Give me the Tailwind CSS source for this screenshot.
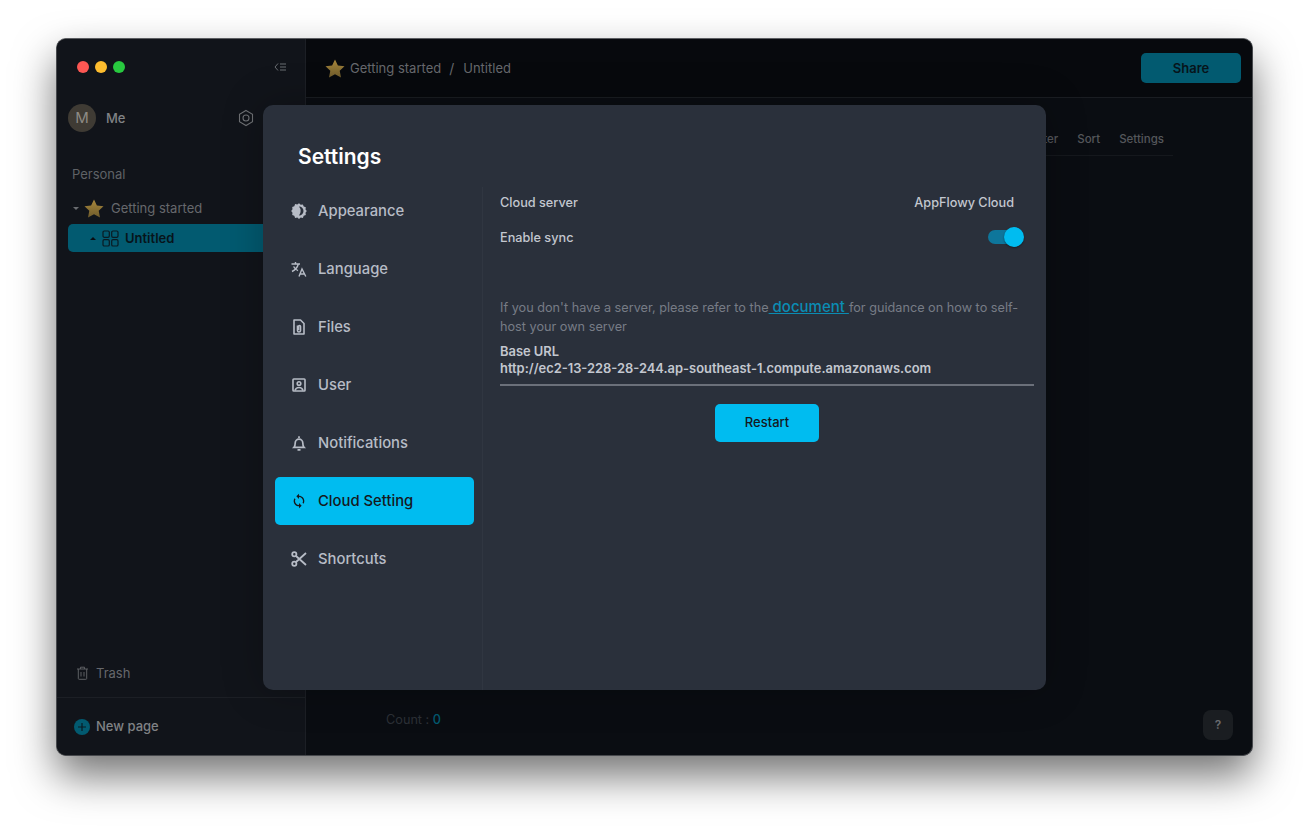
<!DOCTYPE html>
<html><head><meta charset="utf-8"><script src="https://cdn.jsdelivr.net/npm/@tailwindcss/browser@4"></script></head>
<body class="bg-white m-0 font-['Inter',sans-serif]">
<div class="w-[1309px] h-[831px] pt-[38px] pl-[56px] overflow-hidden">
<div class="relative w-[1197px] h-[718px] rounded-[10px] flex overflow-hidden shadow-[0_20px_42px_rgba(0,0,0,0.55)] border border-[#47494d] border-t-[#5c5e62] bg-[#0a0d12]">
  <!-- sidebar -->
  <aside class="w-[249px] shrink-0 bg-[#11141a] border-r border-[#1c1f25] flex flex-col">
    <div class="h-[56px] flex items-center pl-[20px] pr-[19px] gap-[6px]">
      <span class="w-3 h-3 rounded-full bg-[#fc5753]"></span><span class="w-3 h-3 rounded-full bg-[#fdbc2e]"></span><span class="w-3 h-3 rounded-full bg-[#28c93f]"></span>
      <svg class="ml-auto" width="12" height="10" viewBox="0 0 12 10" fill="none" stroke="#6b6e73" stroke-width="1"><path d="M4 1.500 1 5l3 3.500M6 2h6M6 5h6M6 8h6"/></svg>
    </div>
    <div class="flex items-center h-[28px] mt-[9px] pl-[11px] pr-[50px]">
      <span class="w-7 h-7 rounded-full bg-[#3f3b34] text-[#8e8b85] flex items-center justify-center text-[15px]">M</span>
      <span class="ml-[10px] pt-[1px] text-[13px] font-medium text-[#808285]">Me</span>
      <svg class="ml-auto" width="18" height="18" viewBox="0 0 18 18" fill="none" stroke="#6e7074" stroke-width="1.100"><path d="M9 1.500 15.500 5.200v7.600L9 16.500 2.500 12.800V5.200Z"/><circle cx="9" cy="9" r="3"/></svg>
    </div>
    <div class="mt-[34px] pl-[15px] text-[13px] text-[#5f6266] leading-[16px]">Personal</div>
    <div class="mt-[12px] h-[28px] flex items-center pl-[16px]">
      <span class="w-0 h-0 border-x-[3px] border-x-transparent border-t-[3px] border-t-[#6a6c70]"></span>
      <svg class="ml-[5px]" width="20" height="19" viewBox="0 0 20 19"><defs><linearGradient id="s1" x1="0" y1="0" x2="0" y2="1"><stop offset="0" stop-color="#a8873c"/><stop offset="1" stop-color="#6f5c2c"/></linearGradient></defs><path d="M10 .5l2.900 6 6.600.8-4.800 4.500 1.300 6.600L10 15.200l-6 3.200 1.300-6.600L.5 7.300l6.600-.8Z" fill="url(#s1)"/></svg>
      <span class="ml-[7px] pt-[1px] text-[13px] text-[#66686c]">Getting started</span>
    </div>
    <div class="ml-[11px] mr-[11px] mt-[2px] h-[28px] bg-[#025a70] rounded-[5px] flex items-center pl-[22px]">
      <span class="w-0 h-0 border-x-[3px] border-x-transparent border-b-[3px] border-b-[#0a0d12]"></span>
      <svg class="ml-[6px]" width="17" height="17" viewBox="0 0 17 17" fill="none" stroke="#0a1a22" stroke-width="1.200"><rect x="1" y="1" width="6.300" height="6.300" rx="1.300"/><rect x="9.700" y="1" width="6.300" height="6.300" rx="1.300"/><rect x="1" y="9.700" width="6.300" height="6.300" rx="1.300"/><rect x="9.700" y="9.700" width="6.300" height="6.300" rx="1.300"/></svg>
      <span class="ml-[6px] pt-[1px] text-[13px] font-semibold text-[#07141b]">Untitled</span>
    </div>
    <div class="mt-auto h-[48px] flex items-center pl-[19px] text-[13px] text-[#66686c]">
      <svg width="13" height="14" viewBox="0 0 13 14" fill="none" stroke="#5d5f63" stroke-width="1"><path d="M1 3h11M4.500 3V1.200h4V3M2.300 3v9.500a.8.8 0 0 0 .8.8h6.800a.8.8 0 0 0 .8-.8V3M5 6v4.500M8 6v4.500"/></svg>
      <span class="ml-[7px] pt-[1px]">Trash</span>
    </div>
    <div class="h-[58px] border-t border-[#1c1f25] flex items-center pl-[17px]">
      <span class="w-4 h-4 rounded-full bg-[#025a70] flex items-center justify-center"><svg width="10" height="10" viewBox="0 0 10 10" stroke="#0a1a22" stroke-width="1.200"><path d="M5 1v8M1 5h8"/></svg></span>
      <span class="ml-[6px] text-[13px] font-medium text-[#808285]">New page</span>
    </div>
  </aside>
  <!-- main -->
  <main class="flex-1 flex flex-col min-w-0">
    <header class="h-[59px] bg-[#07090d] border-b border-[#1a1d22] flex items-center pl-[19px] pr-[11px]">
      <svg width="20" height="19" viewBox="0 0 20 19"><path d="M10 .5l2.900 6 6.600.8-4.800 4.500 1.300 6.600L10 15.200l-6 3.200 1.300-6.600L.5 7.300l6.600-.8Z" fill="url(#s1)"/></svg>
      <span class="ml-[5px] pt-[1px] text-[13px] text-[#66686c]">Getting started</span>
      <span class="ml-[8px] pt-[1px] text-[14px] text-[#66686c]">/</span>
      <span class="ml-[9px] pt-[1px] text-[13px] text-[#66686c]">Untitled</span>
      <span class="ml-auto w-[100px] h-[30px] pt-[1px] rounded-[5px] bg-[#025a70] text-[#07141b] text-[13px] font-semibold flex items-center justify-center">Share</span>
    </header>
    <div class="flex-1 flex flex-col">
      <div class="ml-[738px] w-[129px] h-[31px] mt-[27px] flex items-start justify-end gap-[19px] pr-[9px] border-b border-[#15181d] text-[11.500px] text-[#55575b] font-medium leading-[28px]">
        <span>Filter</span><span>Sort</span><span>Settings</span>
      </div>
      <div class="mt-auto h-[60px] relative flex items-start pl-[80px] pt-[15px] text-[12.700px] text-[#2c3036]">
        <span>Count :&nbsp;</span><span class="text-[#025a70] font-medium">0</span>
        <span class="absolute right-[19px] top-[15px] w-[30px] h-[30px] rounded-[8px] bg-[#1a1d21] text-[#6a6c70] font-semibold text-[12px] flex items-center justify-center">?</span>
      </div>
    </div>
  </main>
  <!-- modal -->
  <section class="absolute left-[206px] top-[66px] w-[783px] h-[585px] rounded-[10px] bg-[#2a303b] shadow-[0_0_40px_rgba(0,0,0,0.25)] flex flex-col">
    <h2 class="pl-[35px] pt-[37px] h-[82px] text-[21px] leading-[30px] font-semibold text-white">Settings</h2>
    <div class="flex-1 flex min-h-0">
      <nav class="w-[220px] shrink-0 border-r border-[#303641] pl-[12px] pr-[8px] flex flex-col gap-[10px] text-[14.800px] font-medium text-[#b7bcc6]">
        <div class="h-[48px] flex items-center pl-[16px]">
          <svg class="w-[16px] h-[16px]" viewBox="0 0 16 16"><path d="M8 .3l1.700 1.400 2.200-.3.800 2.100 2.100.8-.3 2.200L15.800 8l-1.300 1.800.3 2.200-2.100.8-.8 2.100-2.200-.3L8 15.900l-1.700-1.300-2.200.3-.8-2.100-2.100-.8.3-2.200L.2 8l1.300-1.800-.3-2.200 2.100-.8.8-2.100 2.200.3Z" fill="#b7bcc6"/><path d="M8 3.500A4.500 4.500 0 0 1 8 12.500 7 7 0 0 0 8 3.500Z" fill="#2a303b"/></svg>
          <span class="ml-[11px]">Appearance</span></div>
        <div class="h-[48px] flex items-center pl-[16px]">
          <svg class="w-[16px] h-[16px]" viewBox="0 0 16 16" fill="none" stroke="#b7bcc6" stroke-width="1.400"><path d="M.5 3h8.500M4.500 1v2M7.300 3C6.600 6 4 9 1 10.500M2.600 5.500c1 2 2.700 3.400 4.400 4.200M8 15.500l3-7.500 3.800 7.500M9 13h4.800"/></svg>
          <span class="ml-[11px]">Language</span></div>
        <div class="h-[48px] flex items-center pl-[16px]">
          <svg class="w-[16px] h-[16px]" viewBox="0 0 16 16" fill="none" stroke="#b7bcc6" stroke-width="1.600"><path d="M3 1h6.500L13 4.500V15H3ZM6.500 6.500v5a1.500 1.500 0 0 0 3 0V7.500a1 1 0 0 0-2 0v3.500" stroke-linejoin="round"/></svg>
          <span class="ml-[11px]">Files</span></div>
        <div class="h-[48px] flex items-center pl-[16px]">
          <svg class="w-[16px] h-[16px]" viewBox="0 0 16 16" fill="none" stroke="#b7bcc6" stroke-width="1.600"><rect x="2" y="2" width="12" height="12" rx="0.800"/><circle cx="8" cy="6.500" r="1.800"/><path d="M4 13.500c.6-2.200 2-3 4-3s3.400.8 4 3"/></svg>
          <span class="ml-[11px]">User</span></div>
        <div class="h-[48px] flex items-center pl-[16px]">
          <svg class="w-[16px] h-[16px]" viewBox="0 0 16 16" fill="none" stroke="#b7bcc6" stroke-width="1.700"><path d="M3 12.300c1-1 1.200-2 1.200-4.300a3.800 3.800 0 0 1 7.600 0c0 2.300.2 3.300 1.200 4.300ZM8 1.200V3M6.500 14.800h3"/></svg>
          <span class="ml-[11px]">Notifications</span></div>
        <div class="h-[48px] flex items-center pl-[16px] rounded-[5px] bg-[#00bcf0] text-[#15181d]">
          <svg class="w-[16px] h-[16px]" viewBox="0 0 24 24" fill="#15181d"><path d="M12 4V1L8 5l4 4V6c3.310 0 6 2.690 6 6 0 1.010-.25 1.970-.7 2.800l1.460 1.460C19.540 15.030 20 13.570 20 12c0-4.420-3.580-8-8-8zm0 14c-3.310 0-6-2.690-6-6 0-1.010.25-1.970.7-2.800L5.240 7.740C4.460 8.970 4 10.430 4 12c0 4.420 3.580 8 8 8v3l4-4-4-4v3z"/></svg>
          <span class="ml-[11px]">Cloud Setting</span></div>
        <div class="h-[48px] flex items-center pl-[16px]">
          <svg class="w-[16px] h-[16px]" viewBox="0 0 16 16" fill="none" stroke="#b7bcc6" stroke-width="1.800"><circle cx="3.300" cy="3.300" r="2.100"/><circle cx="3.300" cy="12.700" r="2.100"/><path d="M5 5l10 9M5 11 15 2"/></svg>
          <span class="ml-[11px]">Shortcuts</span></div>
      </nav>
      <div class="flex-1 pl-[17px] pr-[12px] min-w-0">
        <div class="flex justify-between h-[18px] items-center mt-[7px] text-[12.700px] font-medium text-[#c3c7cf]">
          <span>Cloud server</span><span class="mr-[20px]">AppFlowy Cloud</span>
        </div>
        <div class="flex justify-between items-center h-[24px] mt-[14px] text-[12.700px] font-medium text-[#c3c7cf]">
          <span>Enable sync</span>
          <span class="relative w-[36px] h-[20px] mr-[10px] -translate-y-[1px] flex items-center">
            <span class="block w-[30px] h-[14px] rounded-full bg-[#0e769b]"></span>
            <span class="absolute right-0 top-0 w-[20px] h-[20px] rounded-full bg-[#00bcf0] shadow-[0_1px_2px_rgba(0,0,0,0.4)]"></span>
          </span>
        </div>
        <p class="mt-[47px] w-[534px] text-[12.700px] leading-[19px] text-[#777c86]">If you don't have a server, please refer to the<a class="text-[#0b8cb3] underline text-[15px] font-medium leading-[19px]">&nbsp;document&nbsp;</a>for guidance on how to self-host your own server</p>
        <div class="mt-[7px] pb-[7px] border-b-2 border-[#6b707a] text-[12.900px] leading-[17px] font-semibold text-[#c3c7cf]">
          <div>Base URL</div>
          <div>http://ec2-13-228-28-244.ap-southeast-1.compute.amazonaws.com</div>
        </div>
        <div class="flex justify-center mt-[18px]">
          <span class="w-[104px] h-[38px] rounded-[5px] bg-[#00bcf0] text-[#15181d] text-[13px] font-medium flex items-center justify-center">Restart</span>
        </div>
      </div>
    </div>
  </section>
</div>
</div>
</body></html>
